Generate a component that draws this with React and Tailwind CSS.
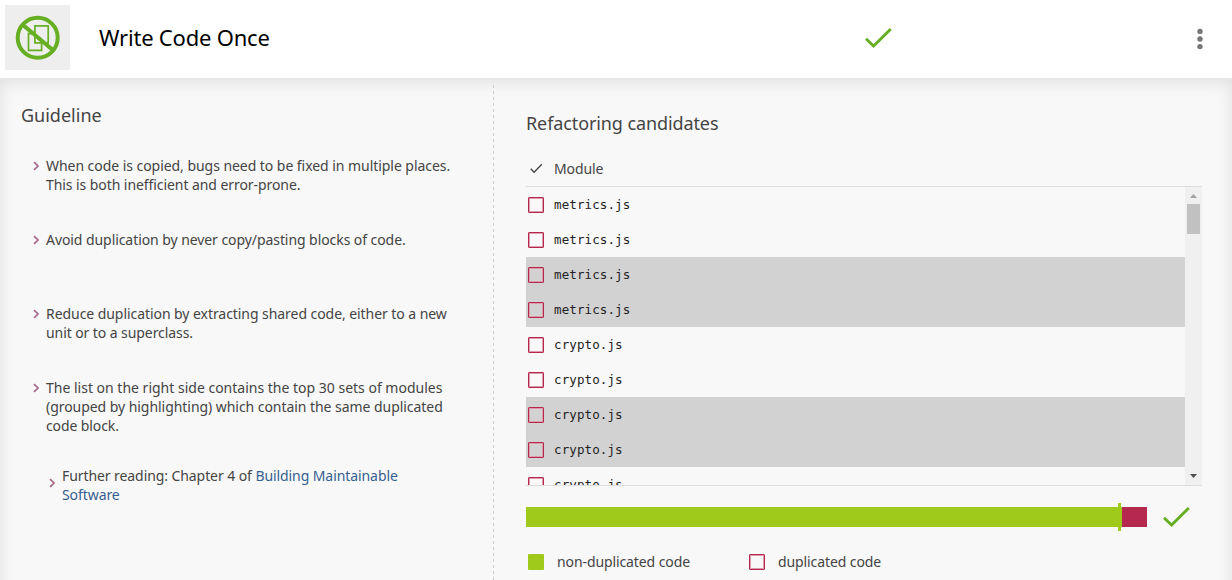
const rows = [
  { name: "metrics.js", shaded: false },
  { name: "metrics.js", shaded: false },
  { name: "metrics.js", shaded: true },
  { name: "metrics.js", shaded: true },
  { name: "crypto.js", shaded: false },
  { name: "crypto.js", shaded: false },
  { name: "crypto.js", shaded: true },
  { name: "crypto.js", shaded: true },
  { name: "crypto.js", shaded: false },
];

function NoDuplicatesIcon() {
  return (
    <svg className="size-[65px]" viewBox="0 0 65 65" fill="none" stroke="#66ae22">
      <circle cx="32.7" cy="32.7" r="20" strokeWidth="4" />
      <rect x="29.9" y="20.9" width="13.3" height="17" strokeWidth="1.7" />
      <path d="M30 28.7H23.5V45.3H36.6V38" strokeWidth="1.7" />
      <path d="M18 20L47.5 44.8" strokeWidth="4" />
    </svg>
  );
}

function CheckMark() {
  return (
    <svg className="h-5 w-[27px]" viewBox="0 0 27 20" fill="none" stroke="#66ae22" strokeWidth="2.9">
      <path d="M1 10.8L8.6 18L25.8 1" />
    </svg>
  );
}

function Box() {
  return <span className="block size-4 shrink-0 rounded-[1px] border-[1.5px] border-[#b5294e] shadow-[inset_0_0_0_1px_#dd9aab]" />;
}

function Chevron() {
  return (
    <svg className="h-2.5 w-[7px] shrink-0" viewBox="0 0 7 10" fill="none" stroke="#a5698a" strokeWidth="1.7">
      <path d="M1 1.2L5 5L1 8.8" />
    </svg>
  );
}

function Item({ className, children }) {
  return (
    <li className={`flex gap-[6px] ${className}`}>
      <span className="flex h-[19px] items-center"><Chevron /></span>
      <div className="whitespace-nowrap">{children}</div>
    </li>
  );
}

export default function App() {
  return (
    <div className="flex h-[580px] w-[1232px] flex-col overflow-hidden bg-[#f8f8f8] font-['Noto_Sans',sans-serif] text-[14px] leading-[19px] text-[#444]">
      <header className="flex h-[78px] shrink-0 items-center bg-white pb-[3px] pl-[5px]">
        <div className="size-[65px] bg-[#eee]"><NoDuplicatesIcon /></div>
        <h1 className="-mt-0.5 ml-[29px] w-[766px] text-[22px] leading-8 tracking-[-0.2px] text-black">Write Code Once</h1>
        <CheckMark />
        <svg className="ml-[304px] mt-[3px] h-[22px] w-2" viewBox="0 0 8 22" fill="#777">
          <circle cx="4" cy="3.4" r="2.7" />
          <circle cx="4" cy="11" r="2.7" />
          <circle cx="4" cy="18.6" r="2.7" />
        </svg>
      </header>

      <main className="-mb-6 flex min-h-0 flex-1 shadow-[inset_0_4px_16px_rgba(0,0,0,0.1)]">
        <section className="mt-[7px] w-[494px] shrink-0 pl-[21px] pt-[17px]">
          <h2 className="text-[18px] leading-[26px]">Guideline</h2>
          <ul className="pl-3 pt-[28px]">
            <Item className="h-[74px]">
              <p className="tracking-[-0.05px]">When code is copied, bugs need to be fixed in multiple places.</p>
              <p className="tracking-[-0.07px]">This is both inefficient and error-prone.</p>
            </Item>
            <Item className="h-[74px]">
              <p className="tracking-[-0.07px]">Avoid duplication by never copy/pasting blocks of code.</p>
            </Item>
            <Item className="h-[74px]">
              <p className="tracking-[-0.06px]">Reduce duplication by extracting shared code, either to a new</p>
              <p className="tracking-[-0.08px]">unit or to a superclass.</p>
            </Item>
            <Item className="h-[88px]">
              <p>The list on the right side contains the top 30 sets of modules</p>
              <p className="tracking-[-0.05px]">(grouped by highlighting) which contain the same duplicated</p>
              <p className="tracking-[-0.1px]">code block.</p>
            </Item>
            <li className="flex gap-[6px] pl-4">
              <span className="flex pt-[12px]"><Chevron /></span>
              <div className="whitespace-nowrap tracking-[-0.08px]">
                <p>Further reading: Chapter 4 of <a className="text-[#365f91]">Building Maintainable</a></p>
                <p><a className="text-[#365f91]">Software</a></p>
              </div>
            </li>
          </ul>
        </section>

        <div className="-ml-px mt-[7px] w-px bg-[repeating-linear-gradient(180deg,#ccc_0_3px,transparent_3px_6px)]" />

        <section className="w-[738px] pl-8 pt-8">
          <h2 className="text-[18px] leading-[26px] tracking-[-0.1px]">Refactoring candidates</h2>
          <div className="flex h-[51px] w-[676px] items-end border-b border-[#ddd] pb-[8px]">
            <svg className="mb-1 ml-[4px] h-[11px] w-[13px]" viewBox="0 0 13 11" fill="none" stroke="#444" strokeWidth="1.3">
              <path d="M0.7 5.8L4.1 9.3L11.8 1.3" />
            </svg>
            <span className="ml-[11px] tracking-[-0.1px]">Module</span>
          </div>
          <div className="flex h-[299px] w-[676px] overflow-hidden border-b border-[#ddd]">
            <div className="w-[659px]">
              {rows.map((r, i) => (
                <div key={i} className={`flex h-[35px] items-center gap-2.5 pl-0.5 ${r.shaded ? "bg-[#d2d2d2]" : ""}`}>
                  <Box />
                  <span className="font-['DejaVu_Sans_Mono',monospace] text-[12.5px] leading-[19px] tracking-[0.1px] text-[#222]">{r.name}</span>
                </div>
              ))}
            </div>
            <div className="flex w-[17px] flex-col items-center bg-[#f0f0f0] pt-[7px]">
              <svg className="h-1 w-[7px]" viewBox="0 0 7 4" fill="#a3a3a3"><path d="M3.5 0L7 4H0Z" /></svg>
              <div className="mt-1.5 h-[30px] w-[13px] bg-[#c1c1c1]" />
              <svg className="mb-[7px] mt-auto h-1 w-[7px]" viewBox="0 0 7 4" fill="#505050"><path d="M0 0H7L3.5 4Z" /></svg>
            </div>
          </div>
          <div className="mt-[17px] flex h-7 items-center">
            <div className="h-5 w-[592px] bg-[#9fc91b]" />
            <div className="h-7 w-[3px] bg-[#9fc91b]" />
            <div className="h-5 w-px bg-[#9fc91b]" />
            <div className="h-5 w-[25px] bg-[#b5294e]" />
            <div className="ml-4"><CheckMark /></div>
          </div>
          <div className="mt-[21px] flex items-center pl-0.5 tracking-[-0.1px]">
            <span className="block size-4 rounded-[1px] bg-[#9fc91b]" />
            <span className="ml-[13px] w-[192px]">non-duplicated code</span>
            <Box />
            <span className="ml-[13px]">duplicated code</span>
          </div>
        </section>
      </main>
    </div>
  );
}
